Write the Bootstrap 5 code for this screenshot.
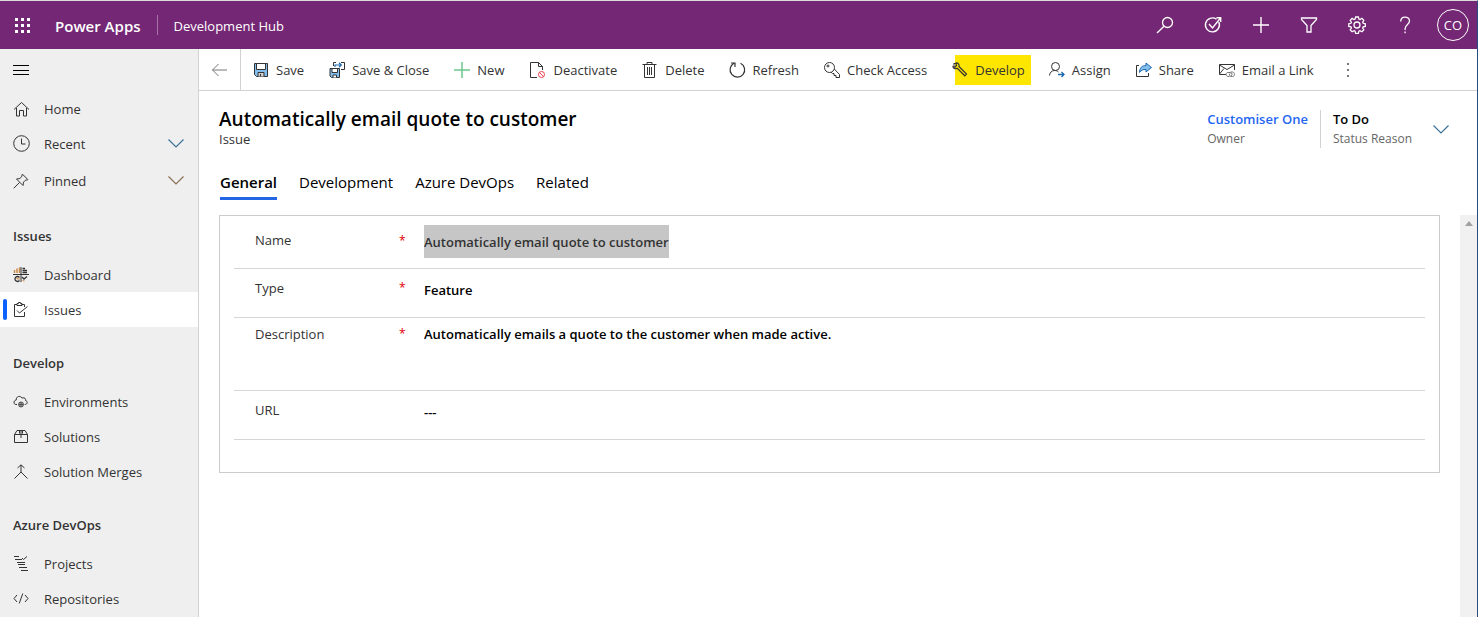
<!DOCTYPE html>
<html lang="en">
<head>
<meta charset="utf-8">
<meta name="viewport" content="width=device-width, initial-scale=1">
<title>Automatically email quote to customer - Development Hub</title>
<link rel="stylesheet" href="https://cdn.jsdelivr.net/npm/bootstrap@5.3.0/dist/css/bootstrap.min.css">
<style>
  body { font-family: "Open Sans", "Noto Sans", sans-serif; font-size: 13px; line-height: 20px; color: #333; border-top: 1px solid #dcdcdc; border-right: 1px solid #2b4a80; }
  svg { display: block; flex: none; fill: none; stroke: currentColor; overflow: visible; }
  button { color: inherit; }
  .semi { font-weight: 600; }
  .ink-green { color: #6cc68e; }
  .ink-blue { color: #3b7299; }
  .ink-brown { color: #8a6f55; }
  .ink-gray { color: #777; }
  .ink-black { color: #000; }
  .solid { fill: currentColor; stroke: none; }

  .topbar { background: #742774; color: #fff; height: 48px; }
  .topbar a { color: #fff; text-decoration: none; padding-top: 2px; }
  .brand { font-size: 15px; }
  .split { width: 1px; height: 20px; background: #a871a8; margin: 0 16px; }
  .tool { width: 48px; height: 48px; padding: 0; border: 0; background: none; display: grid; place-items: center; }
  .waffle { width: 55px; padding: 0 0 0 15px; justify-items: start; }
  .avatar { width: 32px; height: 32px; border: 1px solid #fff; border-radius: 50%; display: grid; place-items: center; font-size: 13px; }

  .sidebar { width: 199px; background: #efefef; border-right: 1px solid #d2d2d2; }
  .burger { height: 42px; padding: 0 13px; }
  .side-link { height: 35px; padding: 0 14px 0 13px; gap: 15px; color: #333; text-decoration: none; position: relative; width: 100%; border: 0; background: none; text-align: left; }
  .side-link.tall { height: 39px; }
  .side-link.active { background: #fff; }
  .side-link.active::before { content: ""; position: absolute; left: 3px; top: 7px; width: 4px; height: 21px; border-radius: 2px; background: #0b62ff; }
  .side-title { font-size: 13px; line-height: 42px; padding: 15px 13px 0; margin: 0; font-weight: 600; }

  .commands { height: 42px; border-bottom: 1px solid #d2d2d2; }
  .command-list { gap: 1px; }
  .back { width: 42px; border: 0; border-right: 1px solid #d2d2d2; background: none; padding: 0 0 0 12px; }
  .cmd { border: 0; background: none; height: 30px; padding: 0 12px; gap: 7px; white-space: nowrap; }
  .cmd.marked { background: linear-gradient(#ffe600, #ffe600) 15px 0 no-repeat; padding-right: 6px; margin-right: 5px; }

  .record { padding: 16px 20px 0 20px; }
  .record h1 { font-size: 19px; line-height: 24px; color: #000; margin: 0; font-weight: 600; }
  .facts { padding-top: 3px; line-height: 19px; }
  .facts dd { margin: 0; font-weight: 600; }
  .facts dt { font-size: 12px; color: #666; font-weight: 400; }
  .facts a { color: #1f66f2; text-decoration: none; }
  .fact-b { border-left: 1px solid #d2d2d2; padding-left: 12px; margin-left: 12px; }
  .expand { border: 0; background: none; padding: 4px 0 0; margin: 0 8px 0 21px; }

  .form-tabs { padding: 23px 20px 0 21px; gap: 22px; }
  .form-tabs button { border: 0; border-bottom: 3px solid transparent; background: none; padding: 0 0 4px; font-size: 15px; line-height: 22px; color: #000; }
  .form-tabs .active { border-color: #2266e3; font-weight: 600; }

  .form-area { padding-top: 15px; }
  .sheet { margin: 0 20px; border: 1px solid #ccc; padding: 0 14px 32px; }
  .field { min-height: 49px; border-bottom: 1px solid #d6d6d6; padding: 8px 0 0 21px; }
  .field.first { min-height: 53px; padding-top: 9px; }
  .field.high { min-height: 73px; padding-top: 5px; }
  .field label { width: 144px; line-height: 22px; }
  .first label { line-height: 30px; }
  .req { width: 25px; color: #e00000; font-size: 12px; line-height: 22px; }
  .first .req { line-height: 32px; }
  .value { border: 0; background: none; padding: 0; margin: 0; color: #000; font-weight: 600; height: 26px; outline: 0; resize: none; appearance: none; border-radius: 0; }
  .value.picked { width: 245px; height: 33px; background: #c6c6c6; color: #333; }
  textarea.value { line-height: 22px; height: 44px; }
  .track { width: 17px; background: #f1f1f1; padding-top: 6px; color: #a0a0a0; }
</style>
</head>
<body class="d-flex flex-column min-vh-100">

<header class="topbar d-flex align-items-center">
  <button class="tool waffle" aria-label="App launcher">
    <svg width="16" height="15" class="solid"><path d="M0 0h3v3H0zM6 0h3v3H6zM12 0h3v3h-3zM0 6h3v3H0zM6 6h3v3H6zM12 6h3v3h-3zM0 12h3v3H0zM6 12h3v3H6zM12 12h3v3h-3z"/></svg>
  </button>
  <a href="#" class="brand semi">Power Apps</a>
  <span class="split"></span>
  <a href="#">Development Hub</a>
  <div class="d-flex ms-auto">
    <button class="tool" aria-label="Search"><svg width="18" height="18" stroke-width="1.3"><circle cx="11.5" cy="6.500" r="5"/><path d="M8 10.200L1 17"/></svg></button>
    <button class="tool" aria-label="Assistant"><svg width="18" height="18" stroke-width="1.4"><path d="M12.500 3.200A7 7 0 1 0 14.800 6M5 8l3.500 4L16.500 2M12.500 1.700h4.200v4.200"/></svg></button>
    <button class="tool" aria-label="New record"><svg width="18" height="18" stroke-width="1.4"><path d="M9 1v16M1 9h16"/></svg></button>
    <button class="tool" aria-label="Filter"><svg width="18" height="18" stroke-width="1.3"><path d="M1.500 2h15v1.500L11 9.500V16H7V9.500L1.500 3.500z"/></svg></button>
    <button class="tool" aria-label="Settings"><svg width="18" height="18" stroke-width="1.3"><path d="M7.600 1h2.800l.5 2.100 1.100.5 1.900-1.200 1.900 1.900-1.100 1.900.5 1.100 2.100.5v2.600l-2.100.5-.5 1.100 1.100 1.900-1.900 1.900-1.900-1.100-1.100.5-.5 2.100H7.600l-.5-2.100-1.100-.5-1.900 1.100-1.900-1.900 1.200-1.900-.5-1.100L.8 10.400V7.800l2.100-.5.5-1.100-1.200-1.900 1.900-1.900L6 3.600l1.100-.5z"/><circle cx="9" cy="9" r="3"/></svg></button>
    <button class="tool" aria-label="Help"><svg width="18" height="18" stroke-width="1.300"><path d="M4.700 5.500C4.700-.5 13.500-.2 13.500 5c0 3.500-4.400 4-4.400 7.500V14M9.100 15.500v1.800"/></svg></button>
    <button class="tool" aria-label="Account"><span class="avatar">CO</span></button>
  </div>
</header>

<div class="d-flex flex-grow-1">
  <nav class="sidebar flex-shrink-0" aria-label="Site map">
    <button class="burger border-0 bg-transparent d-flex align-items-center" aria-label="Collapse"><svg width="16" height="10" class="ink-black"><path d="M0 .5h16M0 5.500h16M0 9.500h16"/></svg></button>

    <a href="#" class="side-link d-flex align-items-center"><svg width="16" height="16"><path d="M1 8.500L8.500 1.500 16 8.500M3.500 7v8h3V9.500h4V15h3V7"/></svg>Home</a>
    <button class="side-link d-flex align-items-center"><svg width="16" height="17"><path d="M8.500 3.500v5.500h4"/><circle cx="8.500" cy="8.500" r="7.800"/></svg>Recent<svg width="16" height="9" class="ms-auto ink-blue" stroke-width="1.2"><path d="M.5.500L8 8 15.500.500"/></svg></button>
    <button class="side-link tall d-flex align-items-center"><svg width="16" height="16"><path d="M9.500 1.200l5.300 5.300-.6.600c-1-.3-1.500-.2-2 .3l-1.700 1.800c-.3 1.300 0 2.200-.5 3.300L3.500 6c1.200-.4 2.100-.2 3.300-.5l1.800-1.700c.5-.5.600-1 .3-2zM6.500 9.500L.7 15.300"/></svg>Pinned<svg width="16" height="9" class="ms-auto ink-brown" stroke-width="1.2"><path d="M.5.500L8 8 15.500.500"/></svg></button>

    <h2 class="side-title">Issues</h2>
    <a href="#" class="side-link d-flex align-items-center"><svg width="16" height="16"><path stroke="#c98a48" stroke-width="1.500" d="M1.500 6V3M4 6V1.500M6.500 6V.5"/><path d="M8 0v15M0 7.500h16"/><path stroke-width="1.300" d="M9.500 1.500H12M9.500 3.500H14M9.500 5.500H14M9 10l2 2 3-2.500M6.500 10.500a2.500 2.500 0 1 0 0 3"/><path stroke="#c98a48" d="M4 10v2h3M9.500 13.500l2 .5"/></svg>Dashboard</a>
    <a href="#" class="side-link active d-flex align-items-center" aria-current="page"><svg width="16" height="16"><path d="M4 2.500H1.500v12h10V10M8.500 2.500h3V5M4 1.500h1.500v-1h2v1H9v2H4zM4 8.500l2.500 2.500 8-6.500"/></svg>Issues</a>

    <h2 class="side-title">Develop</h2>
    <a href="#" class="side-link d-flex align-items-center"><svg width="16" height="16"><path d="M4 10.500C.2 11 0 6.500 3.200 6 3 2.500 7 1 9 4c3-.8 4 1 3.500 2.500 2.500.5 2.300 4-.8 4"/><circle cx="8" cy="10.500" r="2.500" stroke-width=".8"/><path stroke-width=".7" d="M5.500 10.500h5M8 8v5M7 8.500v4M9 8.500v4"/></svg>Environments</a>
    <a href="#" class="side-link d-flex align-items-center"><svg width="16" height="16"><path d="M1.500 5.500v8h13v-8zL4 1.500h8l2.500 4M8 1.500V9M6.500 1.500v3M9.500 1.500v3"/></svg>Solutions</a>
    <a href="#" class="side-link d-flex align-items-center"><svg width="16" height="16"><path d="M8 1v7L1.500 14.500M8 8l6.500 6.500M4.500 4L8 .8 11.500 4"/></svg>Solution Merges</a>

    <h2 class="side-title">Azure DevOps</h2>
    <a href="#" class="side-link d-flex align-items-center"><svg width="16" height="16"><path d="M1 .5h5M2 3.500h7M4 6.500h8M5 8.500h7M6 11.500h8M8 14.500h7M9 2l1.500 1.500L14 .5"/></svg>Projects</a>
    <a href="#" class="side-link d-flex align-items-center"><svg width="16" height="16"><path d="M4 4L1 7.500 4 11M12 4l3 3.500-3 3.500M9.800 2.500l-3.600 10"/></svg>Repositories</a>
  </nav>

  <main class="flex-grow-1 d-flex flex-column bg-white">
    <div class="commands d-flex align-items-stretch" role="toolbar" aria-label="Commands">
      <button class="back" aria-label="Back"><svg width="16" height="14" class="ink-gray"><path d="M7.500 1L1.500 7l6 6M1.500 7H16"/></svg></button>
      <div class="command-list d-flex align-items-center">
        <button class="cmd d-flex align-items-center"><svg width="16" height="16"><path fill="#83beec" d="M1.500 1.500h13v13h-11l-2-2z"/><path fill="#fff" d="M3.500 1.500h9v6h-9z"/><path fill="#d0d0d0" d="M5 14.500v-4h6v4M7.500 12v2.500"/></svg>Save</button>
        <button class="cmd d-flex align-items-center"><svg width="16" height="16"><path fill="#83beec" d="M1 6.500h9.500v9H2.500L1 14z"/><path fill="#fff" d="M3 6.500h5.500v4H3z"/><path fill="#fff" d="M4 15.500v-2.500h3.500v2.500"/><path d="M4.500 4V.5H7M12 .5h3.500v7H12"/><path stroke="#1b68ad" stroke-width="1.200" d="M6 5V3h6M10 .8L12.300 3 10 5.200"/></svg>Save &amp; Close</button>
        <button class="cmd d-flex align-items-center"><svg width="16" height="16" class="ink-green" stroke-width="1.500"><path d="M8 0v16M0 8h16"/></svg>New</button>
        <button class="cmd d-flex align-items-center"><svg width="17" height="16"><path d="M8 15.500H1.500V.5h8l4 4V8M9.500.5v4h4"/><g stroke="#e8404a"><circle cx="12.500" cy="12.500" r="3"/><path d="M10.500 10.500l4 4"/></g></svg>Deactivate</button>
        <button class="cmd d-flex align-items-center"><svg width="16" height="16"><path d="M2.500 2.500v13h10v-13M.5 2.500h14M5 2.500v-2h5v2M5.500 5v8M7.500 5v8M9.500 5v8"/></svg>Delete</button>
        <button class="cmd d-flex align-items-center"><svg width="16" height="16" stroke-width="1.200"><path d="M11.500 1.200A7.300 7.300 0 1 1 5 1.300M2 1h4v4"/></svg>Refresh</button>
        <button class="cmd d-flex align-items-center"><svg width="16" height="16"><circle cx="5.500" cy="5.500" r="5"/><circle cx="4" cy="4" r="1"/><path d="M10.300 7l5.200 5.500v3H12v-2h-2v-2H8.500l-1.500-1.300"/></svg>Check Access</button>
        <button class="cmd marked d-flex align-items-center"><svg width="16" height="16" stroke-width="1.200"><path d="M1 4.500L3 5 4.500 3.500 4 1c2.200-.3 3.500 1.500 3 3.500L14.500 12 12.800 13.800 5.200 6.300C3 7 1 6.500 1 4.500zM1.500 1.500h2M1 3h2"/></svg>Develop</button>
        <button class="cmd d-flex align-items-center"><svg width="16" height="16"><circle cx="6.500" cy="4.500" r="4"/><path d="M.5 13.500c.3-3 2.300-5 5-5 1.800 0 3 .5 4 1.500"/><path stroke="#1b68ad" stroke-width="1.300" d="M9 12.500h6M12.500 10l2.500 2.500-2.500 2.500"/></svg>Assign</button>
        <button class="cmd d-flex align-items-center"><svg width="16" height="16"><path d="M3 3.500H.5v11h12V11"/><path fill="#83beec" stroke="#1b68ad" d="M10 1l5.500 4.500L10 10V7.500C7 7.300 5 8.200 3.500 10.500 3.500 6 6 3.500 10 3.500z"/></svg>Share</button>
        <button class="cmd d-flex align-items-center"><svg width="16" height="16"><path d="M7 12.500H.5v-10h15V8M.5 3L8 7.500 15.500 3M.5 12L5 6.500"/><path stroke="#777" d="M10.500 14.500H9c-2.500-.5-2.500-4 0-4h2.500c2 .3 2 3 .5 3.300M11.500 10h2.300c2.400.5 2.200 4.500-.3 4.500H12c-2-.3-2-3-.5-3.300"/></svg>Email a Link</button>
        <button class="cmd d-flex align-items-center" aria-label="More commands"><svg width="16" height="16" class="solid ink-gray"><path d="M8 1h2v2H8zM8 7h2v2H8zM8 13h2v2H8z"/></svg></button>
      </div>
    </div>

    <div class="record d-flex justify-content-between align-items-start">
      <div>
        <h1>Automatically email quote to customer</h1>
        <div class="lh-sm">Issue</div>
      </div>
      <div class="d-flex align-items-center">
        <dl class="facts d-flex m-0">
          <div class="d-flex flex-column-reverse"><dt>Owner</dt><dd><a href="#">Customiser One</a></dd></div>
          <div class="fact-b d-flex flex-column-reverse"><dt>Status Reason</dt><dd class="text-black">To Do</dd></div>
        </dl>
        <button class="expand" aria-label="More header fields"><svg width="16" height="9" class="ink-blue" stroke-width="1.200"><path d="M.5.500L8 8 15.500.500"/></svg></button>
      </div>
    </div>

    <div class="form-tabs d-flex" role="tablist">
      <button role="tab" class="active" aria-selected="true">General</button>
      <button role="tab">Development</button>
      <button role="tab">Azure DevOps</button>
      <button role="tab">Related</button>
    </div>

    <div class="form-area d-flex flex-grow-1">
      <form class="flex-grow-1">
        <div class="sheet">
          <div class="field first d-flex"><label for="name">Name</label><span class="req">*</span><input id="name" class="value picked" value="Automatically email quote to customer"></div>
          <div class="field d-flex"><label for="type">Type</label><span class="req">*</span><select id="type" class="value flex-grow-1"><option>Feature</option></select></div>
          <div class="field high d-flex"><label for="desc">Description</label><span class="req">*</span><textarea id="desc" class="value flex-grow-1">Automatically emails a quote to the customer when made active.</textarea></div>
          <div class="field d-flex"><label for="url">URL</label><span class="req"></span><input id="url" class="value flex-grow-1" value="---"></div>
        </div>
      </form>
      <div class="track d-flex flex-column align-items-center"><svg width="8" height="5" class="solid"><path d="M0 5l4-5 4 5z"/></svg></div>
    </div>
  </main>
</div>

<script src="https://cdn.jsdelivr.net/npm/bootstrap@5.3.0/dist/js/bootstrap.bundle.min.js"></script>
</body>
</html>
